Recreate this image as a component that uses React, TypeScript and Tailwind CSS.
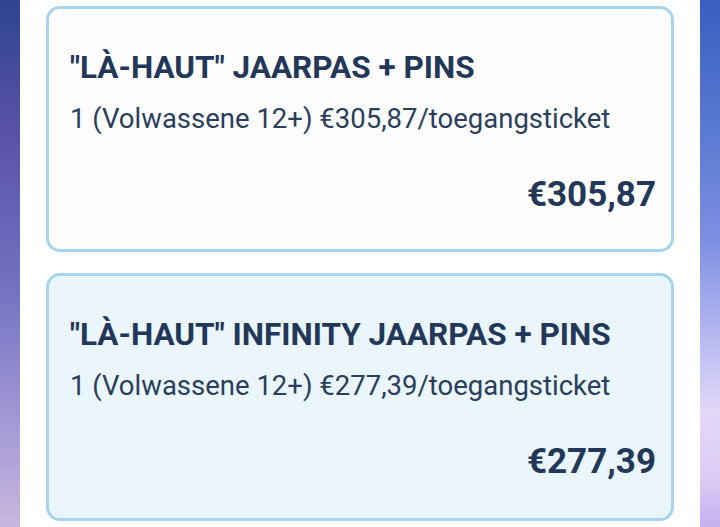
const TICKETS = [
  {
    name: '"LÀ-HAUT" JAARPAS + PINS',
    line: "1 (Volwassene 12+) €305,87/toegangsticket",
    price: "€305,87",
    selected: false,
  },
  {
    name: '"LÀ-HAUT" INFINITY JAARPAS + PINS',
    line: "1 (Volwassene 12+) €277,39/toegangsticket",
    price: "€277,39",
    selected: true,
  },
];

export default function App() {
  return (
    <div className="flex h-[527px] w-[720px] overflow-hidden font-['Roboto',sans-serif]">
      <div className="w-[20px] shrink-0 bg-[linear-gradient(180deg,#2d4493_0%,#5a51a8_25%,#7472c2_55%,#a096d4_78%,#c7b7df_100%)]" />
      <div className="flex flex-1 flex-col gap-[21px] bg-white px-[26px] pt-[6px]">
        {TICKETS.map((t) => (
          <TicketCard key={t.name} {...t} />
        ))}
      </div>
      <div className="w-[20px] shrink-0 bg-[linear-gradient(180deg,#3a5ec0_0%,#5a7ad2_25%,#7c8ee2_45%,#aab0ee_60%,#e2d8f8_78%,#dccdf6_90%,#c7b0ee_100%)]" />
    </div>
  );
}

type TicketCardProps = {
  name: string;
  line: string;
  price: string;
  selected: boolean;
};

function TicketCard({ name, line, price, selected }: TicketCardProps) {
  return (
    <div
      className={
        selected
          ? "flex h-[248px] shrink-0 flex-col rounded-[14px] border-[3px] border-[#a6d5ee] bg-[#eaf5fc] pl-[21px] pr-[15px] pt-[41px]"
          : "flex h-[246px] shrink-0 flex-col rounded-[14px] border-[3px] border-[#a6d5ee] bg-[#fdfdfd] pl-[21px] pr-[15px] pt-[41px]"
      }
    >
      <div className="text-[31.5px] font-bold leading-[36px] text-[#233858]">{name}</div>
      <div className="mt-[17px] text-[27.5px] leading-[32px] text-[#2b3e5b]">{line}</div>
      <div className="mt-[40px] text-right text-[35px] font-bold leading-[40px] text-[#233858]">{price}</div>
    </div>
  );
}
